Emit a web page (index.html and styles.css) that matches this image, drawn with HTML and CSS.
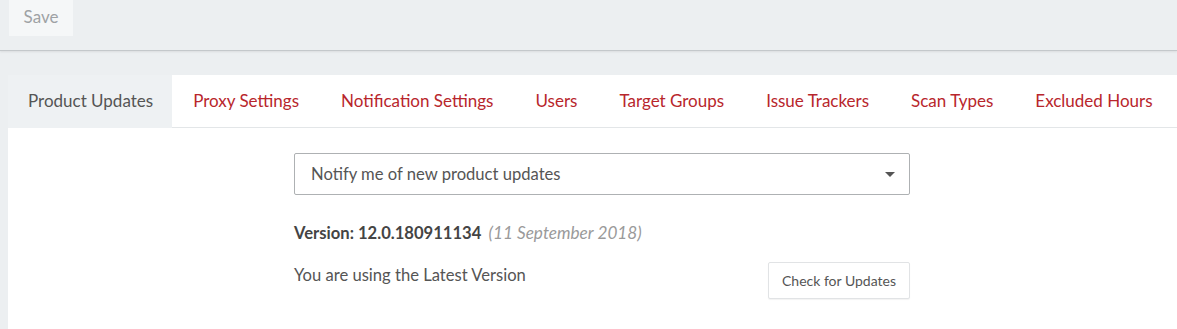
FILE: index.html
```html
<!DOCTYPE html>
<html lang="en">
<head>
    <meta charset="UTF-8">
    <title>Settings - Product Updates</title>
    <link rel="stylesheet" href="styles.css">
</head>
<body>
<div class="toolbar">
    <button class="btn-save" type="button">Save</button>
</div>

<div class="panel">
    <ul class="tabs">
        <li class="tab active">Product Updates</li>
        <li class="tab">Proxy Settings</li>
        <li class="tab">Notification Settings</li>
        <li class="tab">Users</li>
        <li class="tab">Target Groups</li>
        <li class="tab">Issue Trackers</li>
        <li class="tab">Scan Types</li>
        <li class="tab">Excluded Hours</li>
    </ul>

    <div class="tab-body">
        <div class="updates">
            <div class="select">
                <span>Notify me of new product updates</span>
                <span class="caret"></span>
            </div>

            <p class="version">
                <b>Version: 12.0.180911134</b>
                <i>(11 September 2018)</i>
            </p>

            <div class="status-row">
                <span class="status">You are using the Latest Version</span>
                <button class="btn-check" type="button">Check for Updates</button>
            </div>
        </div>
    </div>
</div>
</body>
</html>
```

FILE: styles.css
```css
body {
    margin: 0;
    background: #eceff1;
    font-family: Lato, "Open Sans", sans-serif;
    font-size: 16.6px;
    color: #555;
    overflow: hidden;
}

.toolbar {
    height: 50px;
    padding-left: 9px;
    border-bottom: 1px solid #c4c8cb;
    box-shadow: 0 1px 2px rgba(0, 0, 0, 0.08);
}

.btn-save {
    width: 64px;
    height: 36px;
    border: none;
    background: #f5f7f8;
    color: #9ea2a5;
    font-family: inherit;
    font-size: 17px;
    padding: 0 0 4px;
}

.panel {
    margin: 24px 0 0 8px;
    background: #fff;
    height: 260px;
}

.tabs {
    display: flex;
    margin: 0;
    padding: 0;
    list-style: none;
    border-bottom: 1px solid #e3e6e8;
    font-size: 17px;
}

.tab {
    height: 52px;
    line-height: 52px;
    padding: 0 21px;
    color: #b8262c;
    white-space: nowrap;
}

.tab.active {
    background: #eef1f3;
    color: #555;
    padding: 0 19px 0 20px;
    margin-bottom: -1px;
    border-bottom: 1px solid #eef1f3;
}

.tab-body {
    padding: 25px 0 0 286px;
}

.updates {
    width: 616px;
}

.select {
    display: flex;
    justify-content: space-between;
    align-items: center;
    height: 40px;
    padding: 0 16px;
    border: 1px solid #aeb1b3;
    border-radius: 2px;
    color: #555;
}

.caret {
    width: 0;
    height: 0;
    border-left: 5px solid transparent;
    border-right: 5px solid transparent;
    border-top: 5px solid #555;
    margin-right: -2px;
}

.version {
    margin: 28px 0 0;
    line-height: 20px;
}

.version b {
    color: #444;
}

.version i {
    color: #9a9a9a;
    margin-left: 3px;
    font-size: 17.2px;
}

.status-row {
    display: flex;
    justify-content: space-between;
    align-items: flex-start;
    margin-top: 22px;
}

.status {
    line-height: 20px;
}

.btn-check {
    margin-top: -3px;
    height: 37px;
    padding: 0 13px;
    background: #fff;
    border: 1px solid #e1e3e5;
    border-radius: 2px;
    box-shadow: 0 1px 1px rgba(0, 0, 0, 0.05);
    color: #555;
    font-family: inherit;
    font-size: 14px;
}
```
